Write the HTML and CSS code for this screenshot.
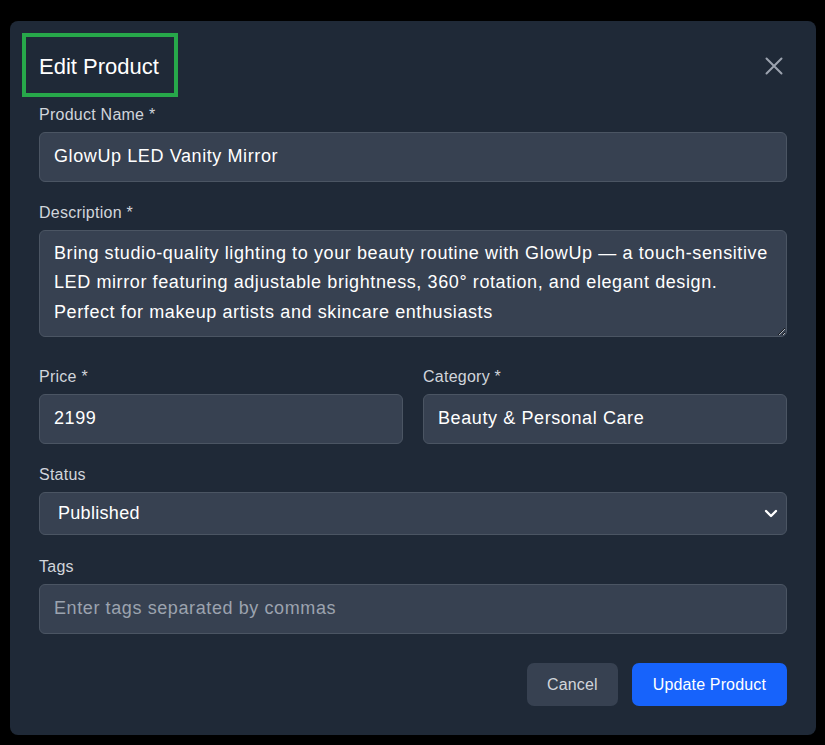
FILE: index.html
```html
<!DOCTYPE html>
<html lang="en">
<head>
<meta charset="utf-8">
<title>Edit Product</title>
<link rel="stylesheet" href="styles.css">
</head>
<body>
<div class="modal">
  <div class="modal-header">
    <h2 class="modal-title">Edit Product</h2>
    <button class="close-btn" type="button" aria-label="Close">
      <svg width="24" height="24" viewBox="0 0 24 24" fill="none" stroke="currentColor" stroke-width="2" stroke-linecap="round"><path d="M4.5 4.5L19.5 19.5M19.5 4.5L4.5 19.5"/></svg>
    </button>
  </div>
  <form class="form">
    <div class="group">
      <label class="label">Product Name *</label>
      <input class="field" type="text" value="GlowUp LED Vanity Mirror">
    </div>
    <div class="group group-text">
      <label class="label">Description *</label>
      <textarea class="field area" rows="3">Bring studio-quality lighting to your beauty routine with GlowUp — a touch-sensitive LED mirror featuring adjustable brightness, 360° rotation, and elegant design. Perfect for makeup artists and skincare enthusiasts</textarea>
    </div>
    <div class="row">
      <div class="group">
        <label class="label">Price *</label>
        <input class="field" type="text" value="2199">
      </div>
      <div class="group">
        <label class="label">Category *</label>
        <input class="field" type="text" value="Beauty &amp; Personal Care">
      </div>
    </div>
    <div class="group group-select">
      <label class="label">Status</label>
      <div class="select-wrap">
        <select class="field select">
          <option>Published</option>
          <option>Draft</option>
        </select>
        <svg class="chevron" width="14" height="9" viewBox="0 0 14 9" fill="none" stroke="#ffffff" stroke-width="2.4" stroke-linecap="round" stroke-linejoin="round"><path d="M2 2l5 5 5-5"/></svg>
      </div>
    </div>
    <div class="group group-last">
      <label class="label">Tags</label>
      <input class="field" type="text" placeholder="Enter tags separated by commas">
    </div>
    <div class="actions">
      <button class="btn btn-cancel" type="button">Cancel</button>
      <button class="btn btn-primary" type="button">Update Product</button>
    </div>
  </form>
</div>
</body>
</html>
```
FILE: styles.css
```css
* { box-sizing: border-box; }
html, body {
  margin: 0;
  padding: 0;
  background: #000;
}
body {
  font-family: "Liberation Sans", Arial, sans-serif;
  color: #f9fafb;
  padding: 21px 9px 10px 10px;
}
.modal {
  width: 806px;
  background: #1f2937;
  border-radius: 8px;
  padding: 12px 29px 29px;
}
.modal-header {
  display: flex;
  align-items: center;
  justify-content: space-between;
  margin-bottom: 8px;
}
.modal-title {
  margin: 0 0 0 -17px;
  font-size: 22px;
  font-weight: normal;
  line-height: 26px;
  color: #ffffff;
  border: 4px solid #27a84a;
  padding: 17px 15px 13px 13px;
}
.close-btn {
  width: 24px;
  height: 24px;
  padding: 0;
  border: 0;
  background: transparent;
  color: #9ca3af;
  display: flex;
  margin-right: 1px;
  margin-top: 2px;
}
.form { margin: 0; }
.group { margin-bottom: 21px; }
.group-text { margin-bottom: 30px; }
.group-select { margin-bottom: 22px; }
.group-last { margin-bottom: 29px; }
.label {
  display: block;
  font-size: 16px;
  line-height: 19px;
  color: #d1d5db;
  margin-bottom: 8px;
  letter-spacing: 0.25px;
}
.field {
  display: block;
  width: 100%;
  height: 50px;
  background: #374151;
  border: 1px solid #4b5563;
  border-radius: 6px;
  color: #ffffff;
  font-family: "Liberation Sans", Arial, sans-serif;
  font-size: 18px;
  line-height: 25px;
  padding: 11px 14px 12px;
  margin: 0;
  outline: none;
  letter-spacing: 0.6px;
}
.field::placeholder { color: #9ca3af; }
.area {
  height: 107px;
  line-height: 29.25px;
  padding: 8px 14px;
  resize: vertical;
  overflow: auto;
}
.row {
  display: grid;
  grid-template-columns: 1fr 1fr;
  gap: 20px;
}
.select-wrap { position: relative; }
.select {
  -webkit-appearance: none;
  appearance: none;
  height: 43px;
  padding: 8px 40px 10px 18px;
  letter-spacing: 0.3px;
}
.chevron {
  position: absolute;
  right: 9px;
  top: 17px;
  pointer-events: none;
}
.actions {
  display: flex;
  justify-content: flex-end;
  gap: 14px;
}
.btn {
  height: 43px;
  border: 0;
  border-radius: 7px;
  font-family: "Liberation Sans", Arial, sans-serif;
  font-size: 16px;
  padding: 0 20px;
  letter-spacing: 0.15px;
}
.btn-cancel {
  background: #374151;
  color: #d1d5db;
}
.btn-primary {
  background: #1763fb;
  color: #ffffff;
  padding: 0 21px;
}
```
